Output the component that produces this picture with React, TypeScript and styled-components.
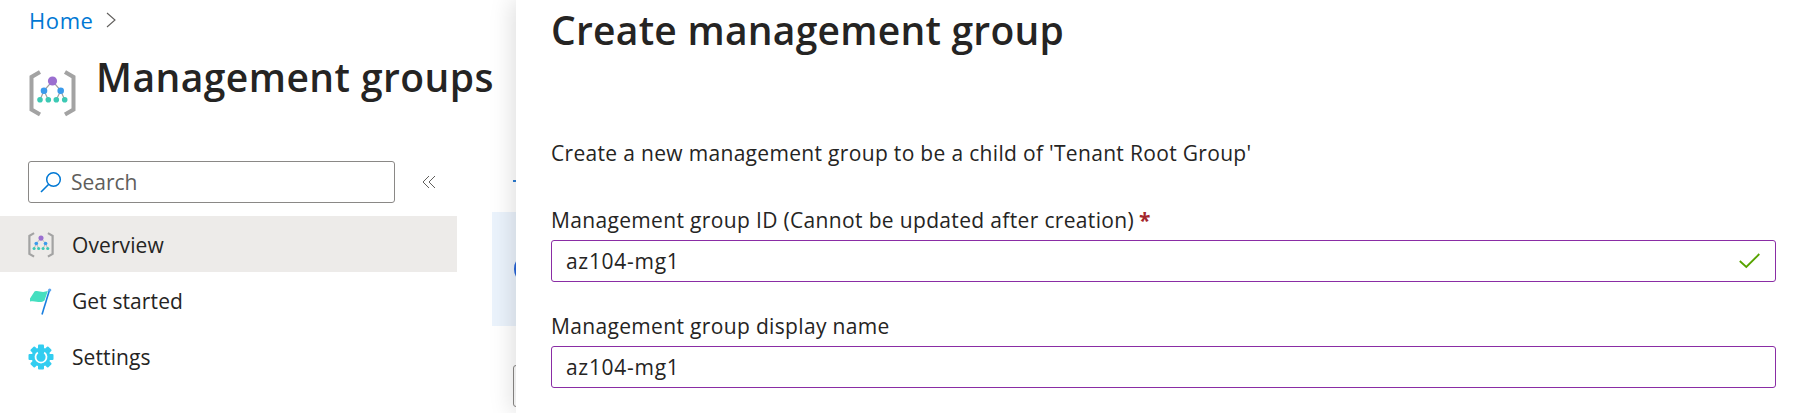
import React from 'react';
import styled, { createGlobalStyle } from 'styled-components';

const GlobalStyle = createGlobalStyle`
  html, body {
    margin: 0;
    padding: 0;
    background: #ffffff;
  }
  body {
    font-family: "Open Sans", "Noto Sans", "Liberation Sans", sans-serif;
    color: #252423;
  }
`;

const Page = styled.div`
  display: flex;
  width: 1810px;
  height: 413px;
  overflow: hidden;
`;

const Background = styled.div`
  display: flex;
  flex: 0 0 516px;
  overflow: hidden;
`;

const Sidebar = styled.div`
  display: flex;
  flex-direction: column;
  flex: 0 0 457px;
  min-width: 0;
`;

const Breadcrumb = styled.div`
  display: flex;
  align-items: center;
  gap: 12px;
  height: 40px;
  padding-left: 29px;
  font-size: 22px;
  letter-spacing: 0.6px;
  color: #0078d4;
`;

const Heading = styled.div`
  display: flex;
  align-items: flex-start;
  gap: 20px;
  height: 121px;
  padding: 30px 0 0 29px;
  box-sizing: border-box;

  svg {
    flex: none;
  }
`;

const PageTitle = styled.h1`
  position: relative;
  z-index: 1;
  flex: none;
  margin: -18px 0 0;
  font-size: 39px;
  font-weight: 600;
  line-height: 50px;
  white-space: nowrap;
  letter-spacing: 0.45px;
`;

const SearchRow = styled.div`
  display: flex;
  align-items: center;
  gap: 27px;
  height: 55px;
  padding: 0 0 13px 28px;
  box-sizing: border-box;
`;

const SearchBox = styled.div`
  display: flex;
  align-items: center;
  gap: 9px;
  width: 367px;
  height: 42px;
  padding-left: 11px;
  box-sizing: border-box;
  border: 1px solid #8a8886;
  border-radius: 3px;
  font-size: 21px;
  color: #605e5c;
`;

const NavItem = styled.div<{ $active?: boolean }>`
  display: flex;
  align-items: center;
  gap: 18px;
  height: 56px;
  padding: 2px 0 0 28px;
  box-sizing: border-box;
  font-size: 21px;
  letter-spacing: 0.1px;
  background: ${(p) => (p.$active ? '#edebe9' : 'transparent')};
`;

const NavIcon = styled.span`
  display: flex;
  justify-content: center;
  width: 26px;
`;

const Content = styled.div`
  display: flex;
  flex-direction: column;
  flex: 1;
  margin-left: 35px;
  padding-top: 180px;
`;

const CommandLine = styled.div`
  width: 24px;
  height: 2px;
  margin-left: 21px;
  background: #2b7cd3;
`;

const Banner = styled.div`
  display: flex;
  align-items: center;
  height: 114px;
  margin-top: 30px;
  padding-left: 22px;
  box-sizing: border-box;
  background: #ebf3fc;
`;

const BannerDot = styled.span`
  flex: none;
  width: 14px;
  height: 22px;
  border-radius: 50%;
  background: #2563d8;
`;

const GhostButton = styled.div`
  width: 60px;
  height: 42px;
  margin: 39px 0 0 21px;
  box-sizing: border-box;
  border: 1px solid #8a8886;
  border-radius: 3px;
`;

const Panel = styled.div`
  position: relative;
  z-index: 1;
  display: flex;
  flex-direction: column;
  flex: 1;
  padding: 0 34px 0 35px;
  background: #ffffff;
  box-shadow: -4px 0 22px rgba(0, 0, 0, 0.13);

  & > * {
    flex: none;
  }
`;

const PanelTitle = styled.h2`
  margin: 0;
  height: 139px;
  font-size: 39px;
  font-weight: 600;
  line-height: 60px;
  white-space: nowrap;
  letter-spacing: 0.25px;
`;

const Description = styled.p`
  margin: 0;
  height: 65px;
  font-size: 21px;
  line-height: 28px;
  letter-spacing: 0.32px;
`;

const Field = styled.div`
  display: flex;
  flex-direction: column;
  margin-bottom: 28px;
`;

const Label = styled.label`
  height: 36px;
  font-size: 21px;
  line-height: 32px;
  letter-spacing: 0.34px;
`;

const Required = styled.span`
  margin-left: 5px;
  color: #a4262c;
  font-weight: 700;
`;

const InputBox = styled.div`
  display: flex;
  align-items: center;
  justify-content: space-between;
  height: 42px;
  padding: 0 15px 0 14px;
  box-sizing: border-box;
  border: 1px solid #8a2da5;
  border-radius: 3px;
  font-size: 21px;
  letter-spacing: 0.7px;
`;

const MgIcon = ({ size }: { size: number }) => (
  <svg width={size} height={size} viewBox="0 0 47 47" fill="none">
    <path d="M11 2 L2.5 7 V39.5 L11 44.5" stroke="#a3a3a3" strokeWidth="4" />
    <path d="M36 2 L44.5 7 V39.5 L36 44.5" stroke="#a3a3a3" strokeWidth="4" />
    <path d="M23.5 11 L15 20.7 M23.5 11 L31.7 20.7 M15 20.7 L11 29.7 M15 20.7 L19.3 29.7 M31.7 20.7 L27.3 29.7 M31.7 20.7 L35.7 29.7" stroke="#a0a0a0" strokeWidth="1.2" />
    <circle cx="23.5" cy="11" r="4.6" fill="#9b6fd0" />
    <circle cx="15" cy="20.7" r="3.3" fill="#3b9bec" />
    <circle cx="31.7" cy="20.7" r="3.3" fill="#3b9bec" />
    <circle cx="11" cy="29.7" r="2.8" fill="#3cc9b4" />
    <circle cx="19.3" cy="29.7" r="2.8" fill="#3cc9b4" />
    <circle cx="27.3" cy="29.7" r="2.8" fill="#3cc9b4" />
    <circle cx="35.7" cy="29.7" r="2.8" fill="#3cc9b4" />
  </svg>
);

const FlagIcon = () => (
  <svg width="24" height="27" viewBox="0 0 24 27" fill="none">
    <path d="M1 10.5 L5.5 3.5 C9.5 1.5 13 6 19 2.5 L15.5 12.5 C11 16 6.5 12 1 13.5 Z" fill="#45dfc0" />
    <path d="M20.5 2 L13 26.5" stroke="#1a7fe0" strokeWidth="1.6" />
    <circle cx="20.7" cy="2" r="1.6" fill="#5ea6ee" />
  </svg>
);

const GearIcon = () => (
  <svg width="26" height="26" viewBox="0 0 26 26" fill="none">
    {[0, 45, 90, 135].map((a) => (
      <rect key={a} x="10" y="0.5" width="6" height="25" rx="1" fill="#32cdf0" transform={`rotate(${a} 13 13)`} />
    ))}
    <circle cx="13" cy="13" r="9.4" fill="#32cdf0" />
    <path d="M9.8 8.6 A5.5 5.5 0 1 0 16.2 8.6" stroke="#ffffff" strokeWidth="1.8" />
  </svg>
);

const SearchIcon = () => (
  <svg width="22" height="22" viewBox="0 0 22 22" fill="none">
    <circle cx="13.5" cy="8.5" r="6.8" stroke="#0078d4" strokeWidth="1.5" />
    <path d="M8.5 13.5 L1 21" stroke="#0078d4" strokeWidth="1.6" />
  </svg>
);

const DoubleChevron = () => (
  <svg width="14" height="14" viewBox="0 0 14 14" fill="none">
    <path d="M7 1 L1 7 L7 13 M13 1 L7 7 L13 13" stroke="#605e5c" strokeWidth="1" />
  </svg>
);

const Chevron = () => (
  <svg width="10" height="16" viewBox="0 0 10 16" fill="none">
    <path d="M1 1 L9 8 L1 15" stroke="#605e5c" strokeWidth="1.1" />
  </svg>
);

const CheckIcon = () => (
  <svg width="21" height="16" viewBox="0 0 21 16" fill="none">
    <path d="M0.8 8 L7.3 14 L20.3 1" stroke="#57a300" strokeWidth="1.8" />
  </svg>
);

export default function App() {
  return (
    <Page>
      <GlobalStyle />
      <Background>
        <Sidebar>
          <Breadcrumb>
            Home
            <Chevron />
          </Breadcrumb>
          <Heading>
            <MgIcon size={47} />
            <PageTitle>Management groups</PageTitle>
          </Heading>
          <SearchRow>
            <SearchBox>
              <SearchIcon />
              Search
            </SearchBox>
            <DoubleChevron />
          </SearchRow>
          <NavItem $active>
            <NavIcon>
              <MgIcon size={26} />
            </NavIcon>
            Overview
          </NavItem>
          <NavItem>
            <NavIcon>
              <FlagIcon />
            </NavIcon>
            Get started
          </NavItem>
          <NavItem>
            <NavIcon>
              <GearIcon />
            </NavIcon>
            Settings
          </NavItem>
        </Sidebar>
        <Content>
          <CommandLine />
          <Banner>
            <BannerDot />
          </Banner>
          <GhostButton />
        </Content>
      </Background>
      <Panel>
        <PanelTitle>Create management group</PanelTitle>
        <Description>Create a new management group to be a child of 'Tenant Root Group'</Description>
        <Field>
          <Label>
            Management group ID (Cannot be updated after creation)
            <Required>*</Required>
          </Label>
          <InputBox>
            az104-mg1
            <CheckIcon />
          </InputBox>
        </Field>
        <Field>
          <Label>Management group display name</Label>
          <InputBox>az104-mg1</InputBox>
        </Field>
      </Panel>
    </Page>
  );
}
